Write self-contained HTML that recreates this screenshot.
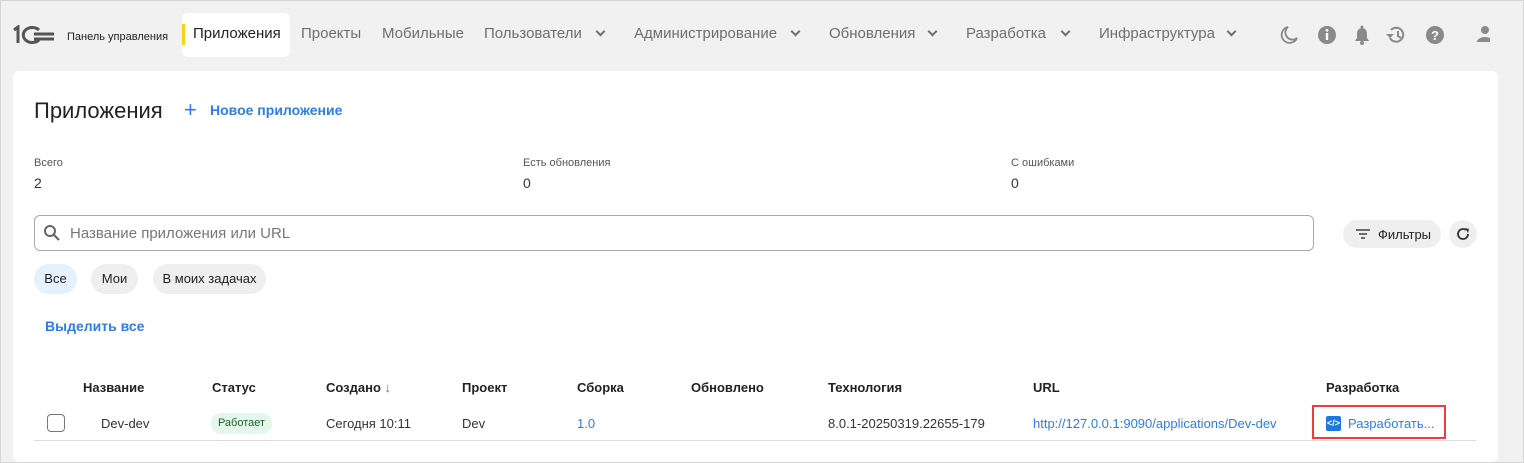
<!DOCTYPE html>
<html><head><meta charset="utf-8"><style>
*{box-sizing:border-box;margin:0;padding:0}
html,body{width:1524px;height:463px;overflow:hidden}
body{background:#f1f1f1;font-family:"Liberation Sans",Arial,sans-serif;position:relative}
.frame{position:absolute;left:0;top:0;width:1524px;height:463px;border:1px solid #d6d6d6;pointer-events:none}
.a{position:absolute;white-space:nowrap}
.nav{font-size:15px;color:#6f6f6f;top:25px}
.chev{display:inline-block;width:7px;height:7px;border-right:2px solid #6f6f6f;border-bottom:2px solid #6f6f6f;transform:rotate(45deg);position:absolute;top:28px}
.card{position:absolute;left:13px;top:71px;width:1485px;height:391px;background:#fff;border-radius:6px}
.lbl{font-size:11px;color:#555;top:157px}
.val{font-size:14px;color:#333;top:175px}
.th{font-size:13px;color:#222;top:380px;font-weight:bold}
.td{font-size:13px;color:#333;top:416px}
.chip{position:absolute;top:264px;height:30px;border-radius:15px;background:#efefef;font-size:13px;color:#222;line-height:30px;text-align:center}
</style></head><body>
<svg class="a" style="left:12px;top:25px" width="44" height="20" viewBox="0 0 44 20"><g fill="none" stroke="#555" stroke-width="3"><path d="M2 5l4-3v16"/><path d="M27 5a9 7.5 0 1 0 0 10"/><path d="M22 9h20M22 14h20"/></g></svg>
<div class="a" style="left:67px;top:31px;font-size:11px;color:#222">Панель управления</div>
<div class="a" style="left:182px;top:13px;width:108px;height:44px;background:#fff;border-radius:6px"></div>
<div class="a" style="left:182px;top:24px;width:3px;height:21px;background:#f7d417"></div>
<div class="a nav" style="left:193px;color:#222">Приложения</div>
<div class="a nav" style="left:301px">Проекты</div>
<div class="a nav" style="left:382px">Мобильные</div>
<div class="a nav" style="left:484px">Пользователи</div><span class="chev" style="left:597px"></span>
<div class="a nav" style="left:634px">Администрирование</div><span class="chev" style="left:792px"></span>
<div class="a nav" style="left:829px">Обновления</div><span class="chev" style="left:929px"></span>
<div class="a nav" style="left:966px">Разработка</div><span class="chev" style="left:1062px"></span>
<div class="a nav" style="left:1099px">Инфраструктура</div><span class="chev" style="left:1228px"></span>
<svg class="a" style="left:1280px;top:24px" width="210" height="22" viewBox="0 0 210 22" fill="#8a8a8a">
<path d="M8 3a8 8 0 1 0 9 11a7 7 0 0 1-9-11z" fill="none" stroke="#8a8a8a" stroke-width="1.8"/>
<circle cx="47" cy="11" r="9"/><rect x="45.8" y="9" width="2.4" height="7" fill="#fff"/><circle cx="47" cy="6.3" r="1.4" fill="#fff"/>
<path d="M75 17h14l-2-3v-5a5 5 0 0 0-10 0v5z"/><circle cx="82" cy="3" r="1.5"/><circle cx="82" cy="19" r="2"/>
<path d="M111 6a7 7 0 1 1-1 8" fill="none" stroke="#8a8a8a" stroke-width="2"/><path d="M106 10l4 4 4-4z"/><path d="M118 7v5l3 2" fill="none" stroke="#8a8a8a" stroke-width="2"/>
<circle cx="155" cy="11" r="9"/><text x="155" y="16" font-size="13" font-weight="bold" fill="#fff" text-anchor="middle" font-family="Liberation Sans">?</text>
<circle cx="205" cy="6" r="4"/><path d="M197 18a8 5 0 0 1 16 0z"/>
</svg>
<div class="card"></div>
<div class="a" style="left:34px;top:98px;font-size:22px;color:#222">Приложения</div>
<div class="a" style="left:184px;top:97px;font-size:22px;color:#2b7de9">+</div>
<div class="a" style="left:210px;top:102px;font-size:14px;color:#2b7de9;font-weight:bold">Новое приложение</div>
<div class="a lbl" style="left:34px">Всего</div><div class="a val" style="left:34px">2</div>
<div class="a lbl" style="left:523px">Есть обновления</div><div class="a val" style="left:523px">0</div>
<div class="a lbl" style="left:1011px">С ошибками</div><div class="a val" style="left:1011px">0</div>
<div class="a" style="left:34px;top:215px;width:1280px;height:36px;border:1px solid #aaa;border-radius:6px"></div>
<svg class="a" style="left:43px;top:224px" width="18" height="18" viewBox="0 0 18 18"><circle cx="7" cy="7" r="5" fill="none" stroke="#666" stroke-width="2"/><path d="M11 11l5 5" stroke="#666" stroke-width="2.2"/></svg>
<div class="a" style="left:70px;top:225px;font-size:15px;color:#777">Название приложения или URL</div>
<div class="a" style="left:1343px;top:220px;width:98px;height:28px;border-radius:14px;background:#efefef"></div>
<svg class="a" style="left:1355px;top:228px" width="16" height="12"><path d="M1 2h14M4 6h8M6 10h4" stroke="#444" stroke-width="1.6"/></svg>
<div class="a" style="left:1378px;top:227px;font-size:13px;color:#222">Фильтры</div>
<div class="a" style="left:1449px;top:220px;width:28px;height:28px;border-radius:14px;background:#efefef"></div>
<svg class="a" style="left:1455px;top:226px" width="16" height="16" viewBox="0 0 16 16"><path d="M13 8a5 5 0 1 1-2-4" fill="none" stroke="#333" stroke-width="1.8"/><path d="M10 2l4 1-1 4z" fill="#333"/></svg>
<div class="chip" style="left:34px;width:43px;background:#e5f1fd">Все</div>
<div class="chip" style="left:91px;width:47px">Мои</div>
<div class="chip" style="left:153px;width:113px">В моих задачах</div>
<div class="a" style="left:45px;top:318px;font-size:14px;color:#2b7de9;font-weight:bold">Выделить все</div>
<div class="a th" style="left:83px">Название</div>
<div class="a th" style="left:212px">Статус</div>
<div class="a th" style="left:326px">Создано <span style="color:#2b7de9">↓</span></div>
<div class="a th" style="left:462px">Проект</div>
<div class="a th" style="left:577px">Сборка</div>
<div class="a th" style="left:691px">Обновлено</div>
<div class="a th" style="left:828px">Технология</div>
<div class="a th" style="left:1033px">URL</div>
<div class="a th" style="left:1326px">Разработка</div>
<div class="a" style="left:47px;top:414px;width:18px;height:18px;border:1.5px solid #777;border-radius:4px"></div>
<div class="a td" style="left:101px">Dev-dev</div>
<div class="a" style="left:211px;top:413px;width:61px;height:21px;border-radius:10px;background:#e3f8ea;font-size:11px;color:#1b5e2b;line-height:21px;text-align:center">Работает</div>
<div class="a td" style="left:326px">Сегодня 10:11</div>
<div class="a td" style="left:462px">Dev</div>
<div class="a td" style="left:577px;color:#2b7de9">1.0</div>
<div class="a td" style="left:828px">8.0.1-20250319.22655-179</div>
<div class="a td" style="left:1033px;color:#2b7de9">http://127.0.0.1:9090/applications/Dev-dev</div>
<div class="a" style="left:1312px;top:405px;width:134px;height:34px;border:2px solid #ef3b3b"></div>
<div class="a" style="left:1326px;top:416px;width:15px;height:15px;background:#1f78e0;border-radius:2px;color:#fff;font-size:9px;line-height:15px;text-align:center;font-weight:bold">&lt;/&gt;</div>
<div class="a td" style="left:1348px;color:#2b7de9">Разработать...</div>
<div class="a" style="left:34px;top:440px;width:1442px;height:1px;background:#ddd"></div>
<div class="frame"></div>
</body></html>
